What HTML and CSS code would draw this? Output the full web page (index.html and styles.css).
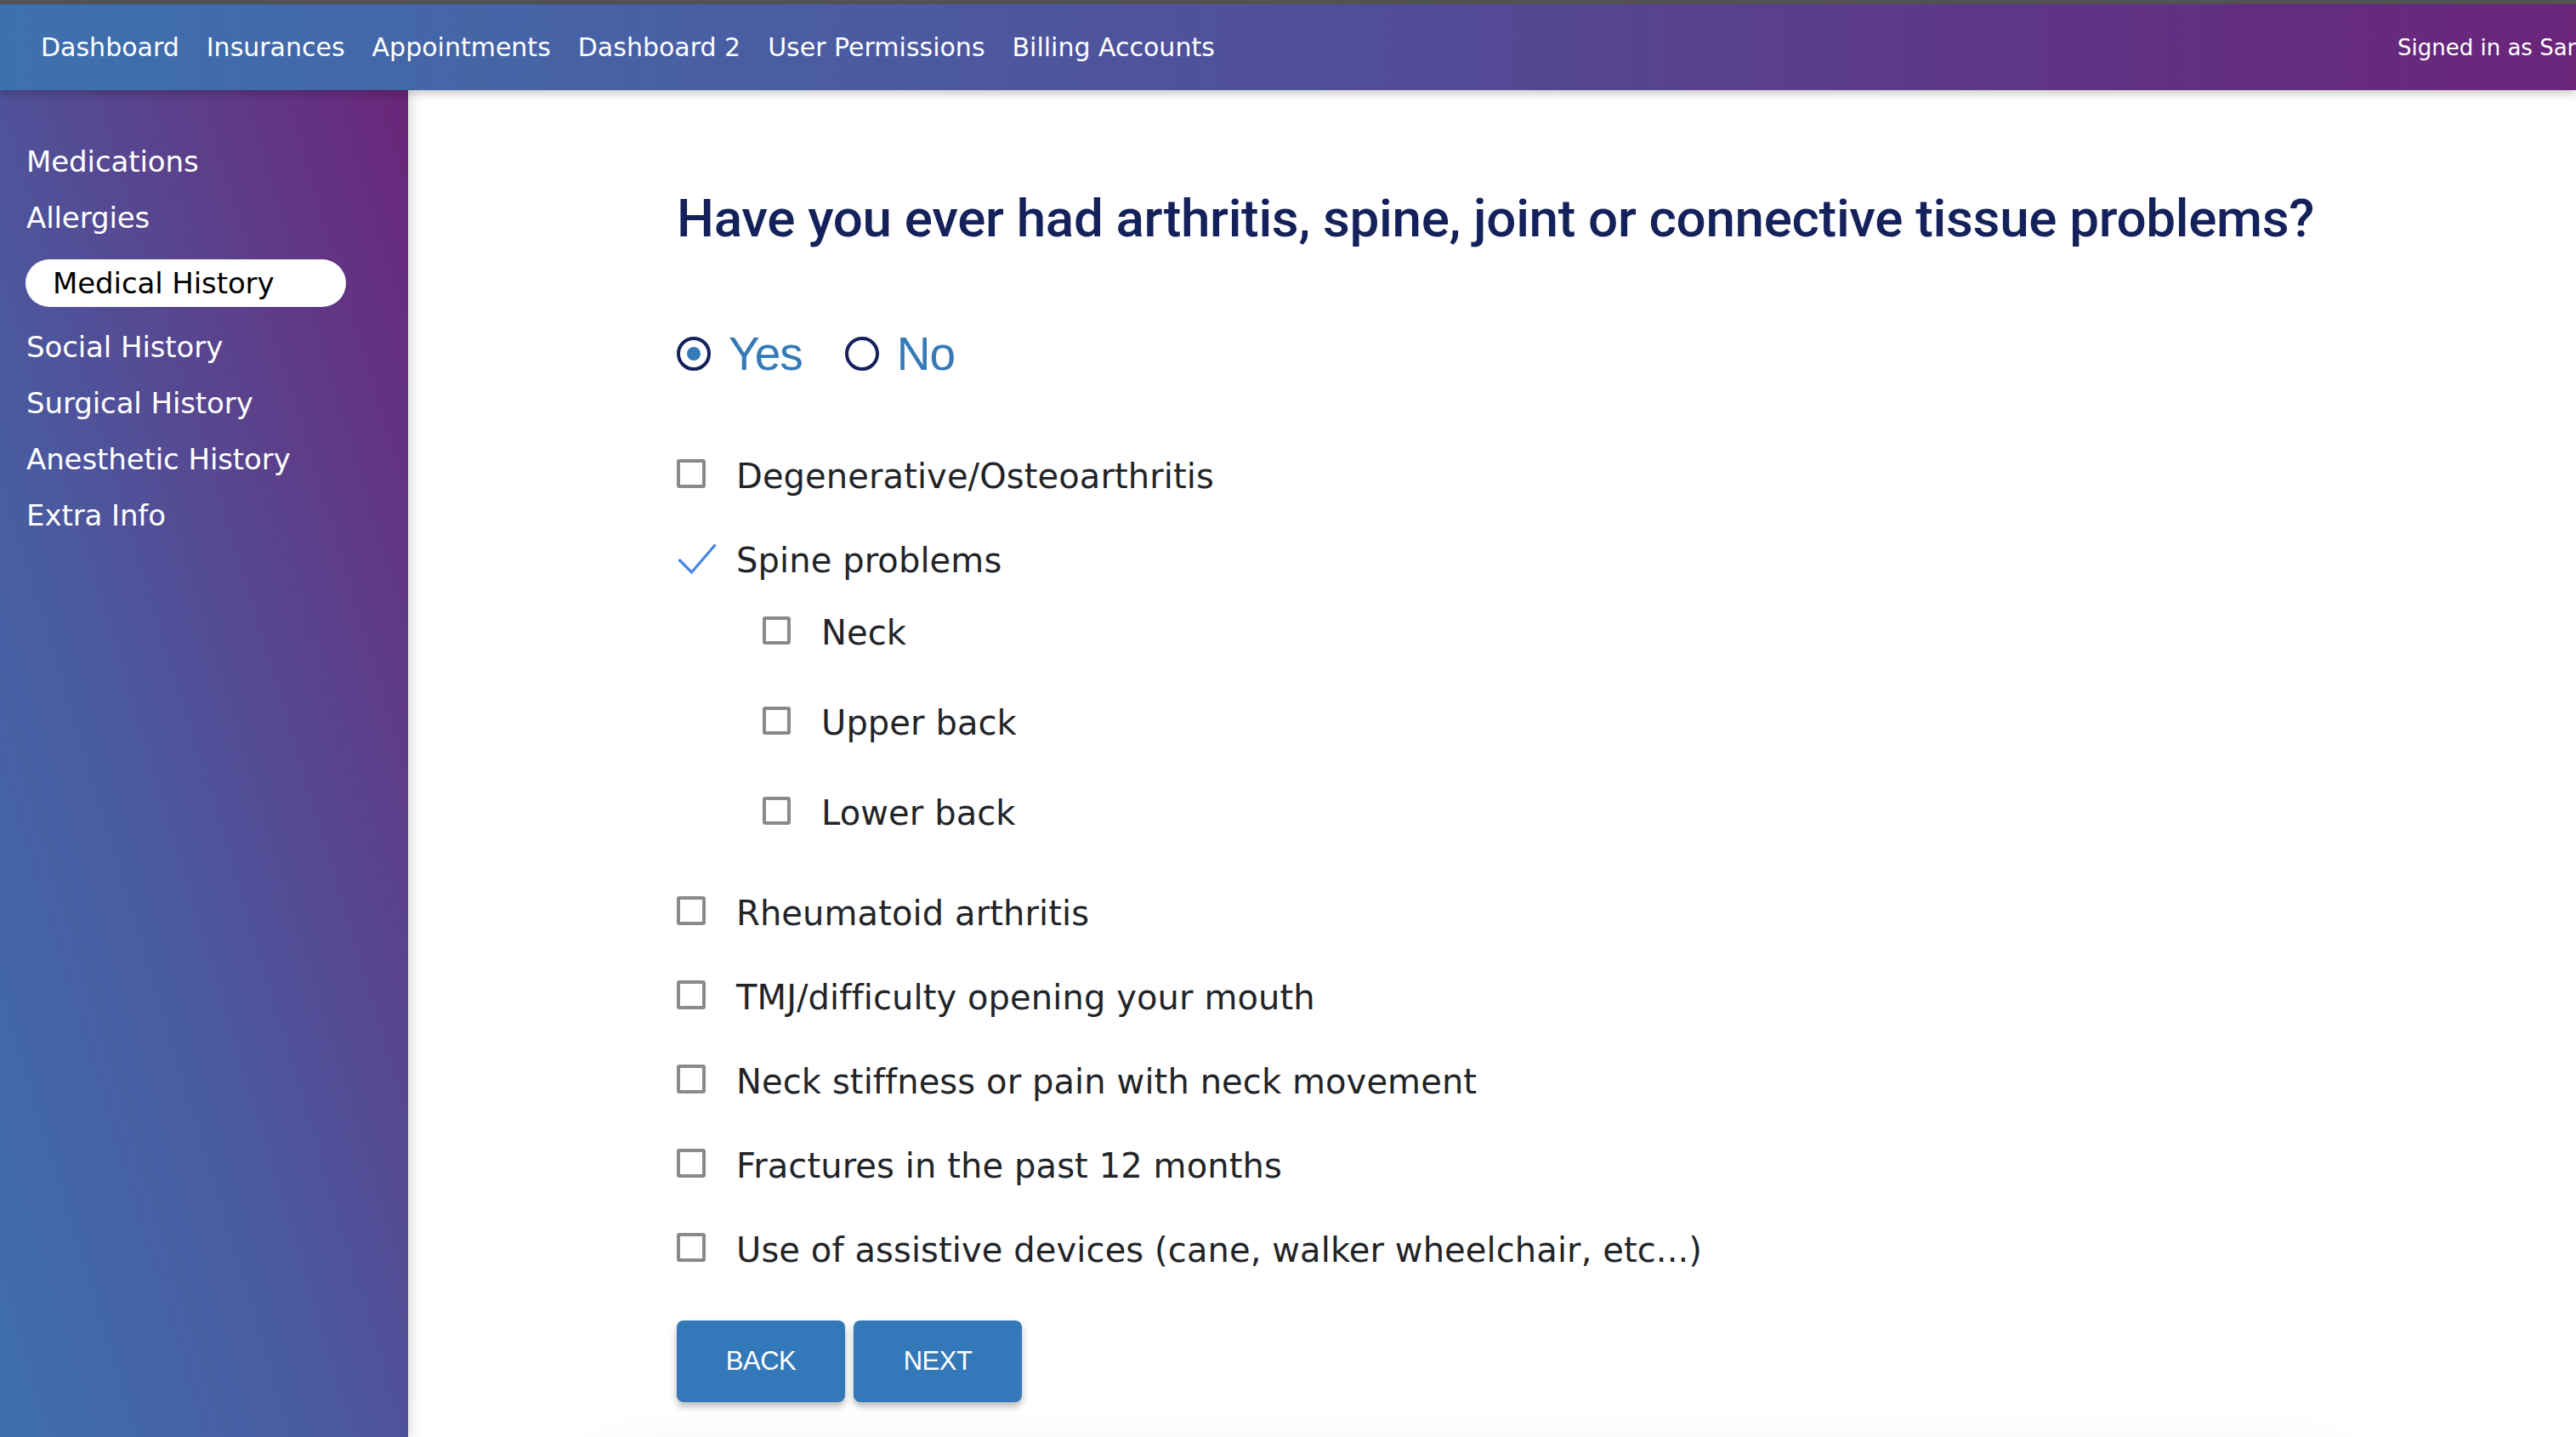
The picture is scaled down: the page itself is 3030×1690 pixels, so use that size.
FILE: index.html
```html
<!DOCTYPE html>
<html lang="en">
<head>
<meta charset="utf-8">
<title>Medical History</title>
<link rel="stylesheet" href="styles.css">
</head>
<body>
<div class="topline"></div>
<header class="topbar">
  <nav class="topnav">
    <a class="topnav-link" href="#">Dashboard</a>
    <a class="topnav-link" href="#">Insurances</a>
    <a class="topnav-link" href="#">Appointments</a>
    <a class="topnav-link" href="#">Dashboard 2</a>
    <a class="topnav-link" href="#">User Permissions</a>
    <a class="topnav-link" href="#">Billing Accounts</a>
  </nav>
  <div class="signed">Signed in as Sarah Johnson</div>
</header>
<div class="layout">
  <aside class="sidebar">
    <a class="side-link" href="#">Medications</a>
    <a class="side-link" href="#">Allergies</a>
    <a class="side-link active" href="#">Medical History</a>
    <a class="side-link" href="#">Social History</a>
    <a class="side-link" href="#">Surgical History</a>
    <a class="side-link" href="#">Anesthetic History</a>
    <a class="side-link" href="#">Extra Info</a>
  </aside>
  <main class="main">
    <section class="question">
      <h1 class="q-title">Have you ever had arthritis, spine, joint or connective tissue problems?</h1>
      <div class="radios">
        <label class="radio"><span class="radio-dot checked"></span><span class="radio-label">Yes</span></label>
        <label class="radio"><span class="radio-dot"></span><span class="radio-label">No</span></label>
      </div>
      <div class="options">
        <div class="opt"><span class="box"></span><span class="opt-text">Degenerative/Osteoarthritis</span></div>
        <div class="opt-group">
          <div class="opt"><span class="box check"><svg class="check-icon" width="46" height="36" viewBox="0 0 46 36"><path d="M1.5 19 L16.5 34 L44.5 1.5" fill="none" stroke="#4a86e8" stroke-width="3.2" stroke-linejoin="miter"/></svg></span><span class="opt-text">Spine problems</span></div>
          <div class="sub-options">
            <div class="opt"><span class="box"></span><span class="opt-text">Neck</span></div>
            <div class="opt"><span class="box"></span><span class="opt-text">Upper back</span></div>
            <div class="opt"><span class="box"></span><span class="opt-text">Lower back</span></div>
          </div>
        </div>
        <div class="opt"><span class="box"></span><span class="opt-text">Rheumatoid arthritis</span></div>
        <div class="opt"><span class="box"></span><span class="opt-text">TMJ/difficulty opening your mouth</span></div>
        <div class="opt"><span class="box"></span><span class="opt-text">Neck stiffness or pain with neck movement</span></div>
        <div class="opt"><span class="box"></span><span class="opt-text">Fractures in the past 12 months</span></div>
        <div class="opt"><span class="box"></span><span class="opt-text">Use of assistive devices (cane, walker wheelchair, etc...)</span></div>
      </div>
      <div class="actions">
        <button class="btn" type="button">BACK</button>
        <button class="btn" type="button">NEXT</button>
      </div>
    </section>
    <div class="page-foot"></div>
  </main>
</div>
</body>
</html>
```
FILE: styles.css
```css
html, body {
  margin: 0;
  padding: 0;
  overflow: hidden;
  background: #ffffff;
}
body {
  width: 3030px;
  height: 1690px;
  font-family: "DejaVu Sans", Verdana, sans-serif;
}
.topline {
  height: 5px;
  background: #545454;
}
.topbar {
  position: relative;
  z-index: 3;
  height: 101px;
  display: flex;
  align-items: center;
  justify-content: space-between;
  background: linear-gradient(90deg, #3d71ae 0%, #4a5da2 30%, #524c96 55%, #622f81 85%, #6a2579 100%);
  box-shadow: 0 4px 10px rgba(0, 0, 0, 0.22);
  white-space: nowrap;
}
.topnav {
  display: flex;
  gap: 32px;
  padding-left: 48px;
}
.topnav-link {
  color: #ffffff;
  text-decoration: none;
  font-size: 30px;
  letter-spacing: 0;
}
.signed {
  color: #ffffff;
  font-size: 26px;
  margin-right: -120px;
  width: 330px;
  flex: none;
}
.layout {
  display: flex;
  height: 1584px;
}
.sidebar {
  position: relative;
  z-index: 2;
  width: 480px;
  flex: none;
  box-sizing: border-box;
  padding: 51px 0 0 31px;
  display: flex;
  flex-direction: column;
  align-items: flex-start;
  background: linear-gradient(to top right, #3e6fae 0%, #4a5aa0 40%, #5e3c88 75%, #6a2679 100%);
  box-shadow: 4px 0 12px rgba(0, 0, 0, 0.14);
}
.side-link {
  color: #ffffff;
  text-decoration: none;
  font-size: 34px;
  line-height: 66px;
  height: 66px;
  letter-spacing: -0.1px;
}
.side-link.active {
  color: #000000;
  background: #ffffff;
  height: 56px;
  line-height: 56px;
  width: 377px;
  box-sizing: border-box;
  padding-left: 32px;
  margin: 16px 0 14px -1px;
  border-radius: 28px;
}
.main {
  flex: 1;
  box-sizing: border-box;
  padding-left: 316px;
  overflow: hidden;
}
.question {
  padding-top: 114px;
}
.q-title {
  margin: 0;
  font-family: Roboto, "Liberation Sans", Arial, sans-serif;
  font-weight: 500;
  font-size: 62px;
  line-height: 74px;
  letter-spacing: -0.35px;
  color: #14215a;
  white-space: nowrap;
}
.radios {
  display: flex;
  align-items: center;
  gap: 50px;
  margin-top: 92px;
  height: 60px;
}
.radio {
  display: flex;
  align-items: center;
  gap: 21px;
}
.radio-dot {
  width: 40px;
  height: 40px;
  box-sizing: border-box;
  border: 4px solid #14215a;
  border-radius: 50%;
  display: flex;
  align-items: center;
  justify-content: center;
}
.radio-dot.checked::after {
  content: "";
  width: 16px;
  height: 16px;
  border-radius: 50%;
  background: #337ab7;
}
.radio-label {
  font-family: "Liberation Sans", Arial, sans-serif;
  font-size: 55px;
  letter-spacing: -1px;
  color: #337ab7;
  line-height: 60px;
}
.options {
  display: flex;
  flex-direction: column;
  gap: 49px;
  margin-top: 89px;
}
.opt {
  display: flex;
  align-items: center;
  height: 50px;
}
.box {
  width: 34px;
  height: 34px;
  box-sizing: border-box;
  border: 4px solid #8a8a8a;
  border-radius: 3px;
  flex: none;
  margin-right: 36px;
  margin-top: -6px;
}
.box.check {
  border: 0;
  position: relative;
}
.check-icon {
  position: absolute;
  left: 1px;
  top: 0;
}
.opt-text {
  font-size: 40px;
  color: #222428;
  letter-spacing: 0.1px;
  white-space: nowrap;
}
.opt-group {
  margin-bottom: 19px;
}
.sub-options {
  display: flex;
  flex-direction: column;
  gap: 56px;
  margin-top: 35px;
  padding-left: 101px;
}
.sub-options .box {
  width: 33px;
  height: 33px;
}
.actions {
  display: flex;
  gap: 10px;
  margin-top: 58px;
}
.btn {
  width: 198px;
  height: 96px;
  border: 0;
  border-radius: 8px;
  background: #3378b8;
  color: #ffffff;
  font-family: "Liberation Sans", Arial, sans-serif;
  font-size: 31px;
  letter-spacing: -0.5px;
  box-shadow: 0 5px 9px rgba(0, 0, 0, 0.28);
  padding: 0;
}
.page-foot {
  margin: 80px 0 0 -120px;
  width: 2100px;
  height: 200px;
  border-radius: 80px;
  box-shadow: 0 0 70px 14px rgba(0, 0, 0, 0.07);
}
```
